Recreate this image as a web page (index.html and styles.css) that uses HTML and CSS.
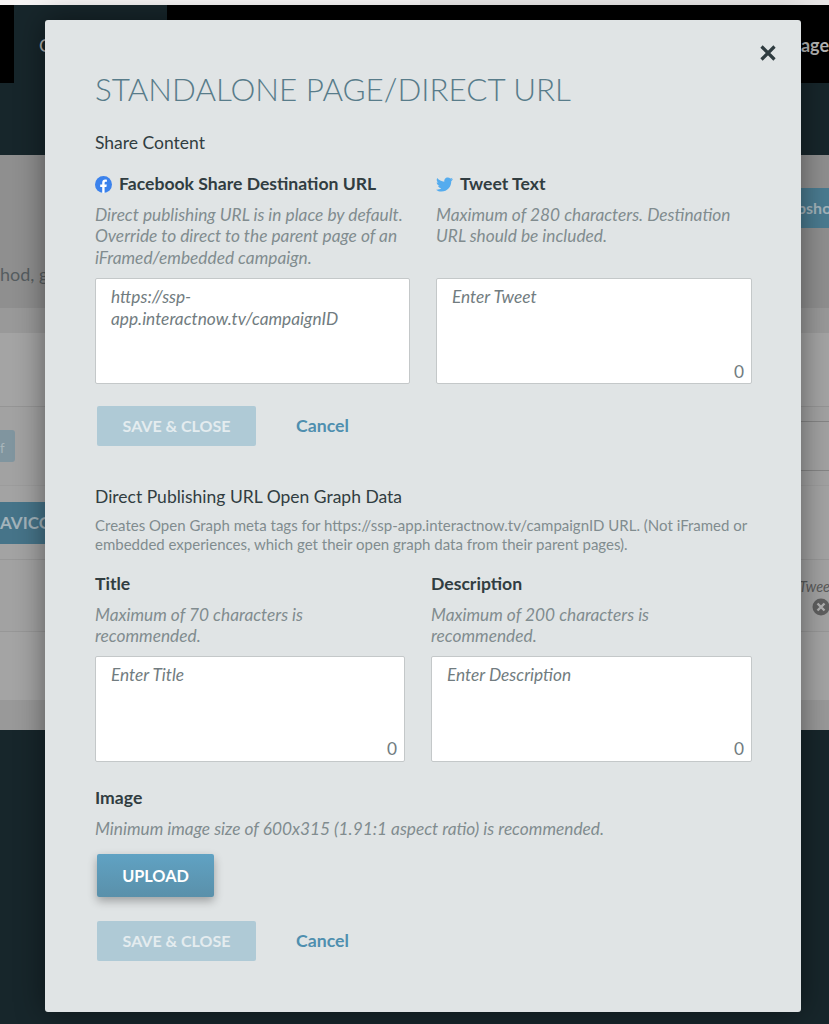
FILE: index.html
```html
<!DOCTYPE html>
<html lang="en">
<head>
    <meta charset="UTF-8">
    <meta name="viewport" content="width=device-width, initial-scale=1.0">
    <title>Standalone Page/Direct URL</title>
    <link rel="stylesheet" href="styles.css">
</head>
<body>
    <div class="page">
        <div class="browser-strip"></div>
        <div class="topbar">
            <div class="topbar-gap"></div>
            <div class="topbar-tab">C</div>
            <div class="topbar-right">nage</div>
        </div>
        <div class="subbar"></div>
        <div class="content">
            <div class="content-row row-a">
                <span class="behind-text">hod, g</span>
                <span class="behind-btn behind-snapshot">psho</span>
            </div>
            <div class="content-row row-b"></div>
            <div class="content-row row-c"></div>
            <div class="content-row row-d">
                <span class="behind-small">f</span>
                <span class="behind-input"></span>
            </div>
            <div class="content-row row-e">
                <span class="behind-btn behind-favicon">AVICO</span>
            </div>
            <div class="content-row row-f">
                <span class="behind-tweet">Twee</span>
                <svg class="behind-x" width="18" height="18" viewBox="0 0 18 18"><circle cx="9" cy="9" r="8.500" fill="#5f5f5f"/><path d="M5.500 5.500 L12.500 12.500 M12.500 5.500 L5.500 12.500" stroke="#b0b0b0" stroke-width="2.400"/></svg>
            </div>
            <div class="content-row row-g"></div>
            <div class="content-row row-h"></div>
        </div>
        <div class="footer"></div>
    </div>

    <div class="modal">
        <button class="modal-close" aria-label="Close">
            <svg width="18" height="18" viewBox="0 0 18 18"><path d="M2.500 2.500 L15.500 15.500 M15.500 2.500 L2.500 15.500" stroke="#2f3c40" stroke-width="3.200" fill="none"/></svg>
        </button>
        <h1 class="modal-title">STANDALONE PAGE/DIRECT URL</h1>

        <h2 class="section-title">Share Content</h2>
        <div class="share-grid">
            <div class="field">
                <label class="field-label">
                    <svg class="field-icon" width="17" height="17" viewBox="0 0 17 17"><circle cx="8.500" cy="8.500" r="8.500" fill="#3b82ec"/><path d="M7.200 17V11H5.200V8.500H7.200V6.700C7.200 4.700 8.400 3.600 10.200 3.600C11 3.600 11.900 3.800 11.900 3.800V5.800H10.900C9.900 5.800 9.600 6.400 9.600 7V8.500H11.800L11.400 11H9.600V17Z" fill="#fff"/></svg>
                    Facebook Share Destination URL
                </label>
                <p class="field-hint">Direct publishing URL is in place by default. Override to direct to the parent page of an iFramed/embedded campaign.</p>
                <div class="text-box">https://ssp-<br>app.interactnow.tv/campaignID</div>
            </div>
            <div class="field">
                <label class="field-label">
                    <svg class="field-icon" width="17" height="15" viewBox="0 0 24 20"><path d="M24 2.400c-.9.400-1.800.7-2.800.8 1-.6 1.800-1.600 2.200-2.700-1 .6-2 1-3.100 1.200C19.300.7 18 0 16.600 0c-3.200 0-5.500 3-4.800 6C7.700 5.800 4.100 3.800 1.700.9.400 3.100 1 6 3.200 7.500c-.8 0-1.600-.2-2.200-.6 0 2.300 1.600 4.400 4 4.900-.7.200-1.500.2-2.200.100.6 2 2.500 3.400 4.600 3.400-2.100 1.600-4.700 2.300-7.400 2C2.200 19.200 4.800 20 7.500 20c9.100 0 14.300-7.700 14-14.600 1-.7 1.800-1.600 2.500-3z" fill="#55acee"/></svg>
                    Tweet Text
                </label>
                <p class="field-hint">Maximum of 280 characters. Destination URL should be included.</p>
                <div class="text-box">Enter Tweet<span class="counter">0</span></div>
            </div>
        </div>
        <div class="actions actions-first">
            <button class="btn btn-disabled">SAVE &amp; CLOSE</button>
            <a class="cancel-link">Cancel</a>
        </div>

        <h2 class="section-title og-title">Direct Publishing URL Open Graph Data</h2>
        <p class="section-text">Creates Open Graph meta tags for https://ssp-app.interactnow.tv/campaignID URL. (Not iFramed or embedded experiences, which get their open graph data from their parent pages).</p>
        <div class="og-grid">
            <div class="field">
                <label class="field-label">Title</label>
                <p class="field-hint">Maximum of 70 characters is recommended.</p>
                <div class="text-box">Enter Title<span class="counter">0</span></div>
            </div>
            <div class="field">
                <label class="field-label">Description</label>
                <p class="field-hint">Maximum of 200 characters is recommended.</p>
                <div class="text-box">Enter Description<span class="counter">0</span></div>
            </div>
        </div>

        <label class="field-label image-label">Image</label>
        <p class="field-hint">Minimum image size of 600x315 (1.91:1 aspect ratio) is recommended.</p>
        <button class="btn btn-upload">UPLOAD</button>
        <div class="actions actions-last">
            <button class="btn btn-disabled">SAVE &amp; CLOSE</button>
            <a class="cancel-link">Cancel</a>
        </div>
    </div>
</body>
</html>
```

FILE: styles.css
```css
* {
    box-sizing: border-box;
}

body {
    margin: 0;
    font-family: Lato, sans-serif;
    background: #17262b;
    height: 1024px;
    overflow: hidden;
}

.page {
    height: 1024px;
    display: flex;
    flex-direction: column;
}

.browser-strip {
    height: 5px;
    background: linear-gradient(to right, #f6f4f4 50.7%, #e8e6e6 50.7%);
}

.topbar {
    height: 78px;
    background: #000;
    display: flex;
    color: #b5b5b5;
    font-size: 18px;
    font-weight: 700;
    line-height: 24px;
}

.topbar-gap {
    width: 14px;
}

.topbar-tab {
    width: 153px;
    background: #17262b;
    padding: 28px 0 0 25px;
    font-weight: 400;
}

.topbar-right {
    flex: 1;
    padding-top: 28px;
    text-align: right;
}

.subbar {
    height: 72px;
    background: #17262b;
}

.content {
    height: 575px;
    display: flex;
    flex-direction: column;
}

.content-row {
    position: relative;
}

.row-a {
    height: 153px;
    background: #8f8f8f;
}

.row-b {
    height: 25px;
    background: #999;
}

.row-c {
    height: 74px;
    background: #a4a4a4;
    border-bottom: 1px solid #959595;
}

.row-d {
    height: 79px;
    background: #a2a2a2;
    border-bottom: 1px solid #9c9c9c;
}

.row-e {
    height: 74px;
    background: #a3a3a3;
    border-bottom: 1px solid #979797;
}

.row-f {
    height: 72px;
    background: #a2a2a2;
    border-bottom: 1px solid #979797;
}

.row-g {
    height: 68px;
    background: #a4a4a4;
}

.row-h {
    height: 30px;
    background: #999;
}

.behind-text {
    position: absolute;
    left: 0;
    top: 108px;
    font-size: 18px;
    line-height: 22px;
    color: #565d60;
}

.behind-btn {
    position: absolute;
    background: #41707f;
    color: #a3b3bb;
    font-weight: 700;
}

.behind-snapshot {
    left: 775px;
    top: 33px;
    width: 60px;
    height: 40px;
    padding-left: 22px;
    font-size: 16px;
    line-height: 40px;
    background: #4a7b90;
    border-radius: 3px;
}

.behind-favicon {
    left: -30px;
    top: 16px;
    width: 80px;
    height: 42px;
    padding-left: 30px;
    font-size: 17px;
    line-height: 42px;
    background: #467489;
}

.behind-small {
    position: absolute;
    left: -20px;
    top: 23px;
    width: 35px;
    height: 32px;
    background: #80959f;
    color: #a9b6bb;
    font-size: 13px;
    line-height: 36px;
    padding-left: 20px;
    border-radius: 3px;
}

.behind-input {
    position: absolute;
    left: 760px;
    top: 14px;
    width: 69px;
    height: 50px;
    border-top: 1px solid #858585;
    border-bottom: 1px solid #858585;
}

.behind-tweet {
    position: absolute;
    left: 799px;
    top: 18px;
    font-size: 14.500px;
    font-style: italic;
    line-height: 18px;
    color: #5b5b5b;
}

.behind-x {
    position: absolute;
    left: 812px;
    top: 38px;
}

.footer {
    flex: 1;
    background: #17262b;
}

.modal {
    position: absolute;
    left: 45px;
    top: 20px;
    width: 756px;
    height: 992px;
    padding: 49px 49px 0 50px;
    background: #e0e4e5;
    border-radius: 3px;
    box-shadow: 0 0 30px rgba(0, 0, 0, 0.45);
    color: #313d41;
}

.modal-close {
    position: absolute;
    right: 24px;
    top: 24px;
    padding: 0;
    border: 0;
    background: none;
    line-height: 0;
}

.modal-title {
    margin: 0;
    font-size: 31.4px;
    font-weight: 300;
    line-height: 40px;
    color: #587c8a;
}

.section-title {
    margin: 0;
    font-size: 17.5px;
    font-weight: 400;
    line-height: 24px;
}

.modal-title + .section-title {
    margin-top: 22px;
}

.share-grid {
    display: grid;
    grid-template-columns: 315px 316px;
    gap: 26px;
    margin-top: 17px;
}

.og-grid {
    display: grid;
    grid-template-columns: 310px 321px;
    gap: 26px;
    margin-top: 18px;
}

.field {
    display: flex;
    flex-direction: column;
}

.field-label {
    display: flex;
    align-items: center;
    gap: 7px;
    font-size: 17.6px;
    font-weight: 700;
    line-height: 24px;
}

.field-hint {
    margin: 7.5px 0 10px;
    font-size: 17.3px;
    font-style: italic;
    line-height: 21.5px;
    color: #818c8f;
}

.og-grid .field-hint {
    margin-bottom: 9px;
}

.text-box {
    position: relative;
    height: 106px;
    margin-top: auto;
    padding: 7px 15px;
    background: #fff;
    border: 1px solid #c4c8c9;
    border-radius: 2px;
    font-size: 17.3px;
    font-style: italic;
    line-height: 21.5px;
    color: #717c80;
}

.counter {
    position: absolute;
    right: 7px;
    bottom: 1px;
    font-style: normal;
}

.actions {
    display: flex;
    align-items: center;
    gap: 40px;
    margin-left: 2px;
}

.actions-first {
    margin-top: 21.5px;
}

.actions-last {
    margin-top: 23.5px;
}

.btn {
    height: 40px;
    padding: 0;
    border: 0;
    border-radius: 2px;
    font-family: Lato, sans-serif;
    font-size: 16px;
    font-weight: 700;
    color: #fff;
}

.btn-disabled {
    width: 159px;
    background: #afcad6;
    color: #e4ecef;
}

.btn-upload {
    display: block;
    width: 117px;
    height: 43px;
    margin: 15px 0 0 2px;
    font-size: 16.3px;
    background: linear-gradient(#60a2c3, #5a90aa);
    box-shadow: 0 4px 10px rgba(0, 0, 0, 0.3);
}

.cancel-link {
    font-size: 17.7px;
    font-weight: 700;
    color: #4f8faf;
}

.og-title {
    margin-top: 39.5px;
}

.section-text {
    margin: 7px 0 0;
    font-size: 15px;
    line-height: 19px;
    color: #818c8f;
}

.image-label {
    margin-top: 24.5px;
}
```
